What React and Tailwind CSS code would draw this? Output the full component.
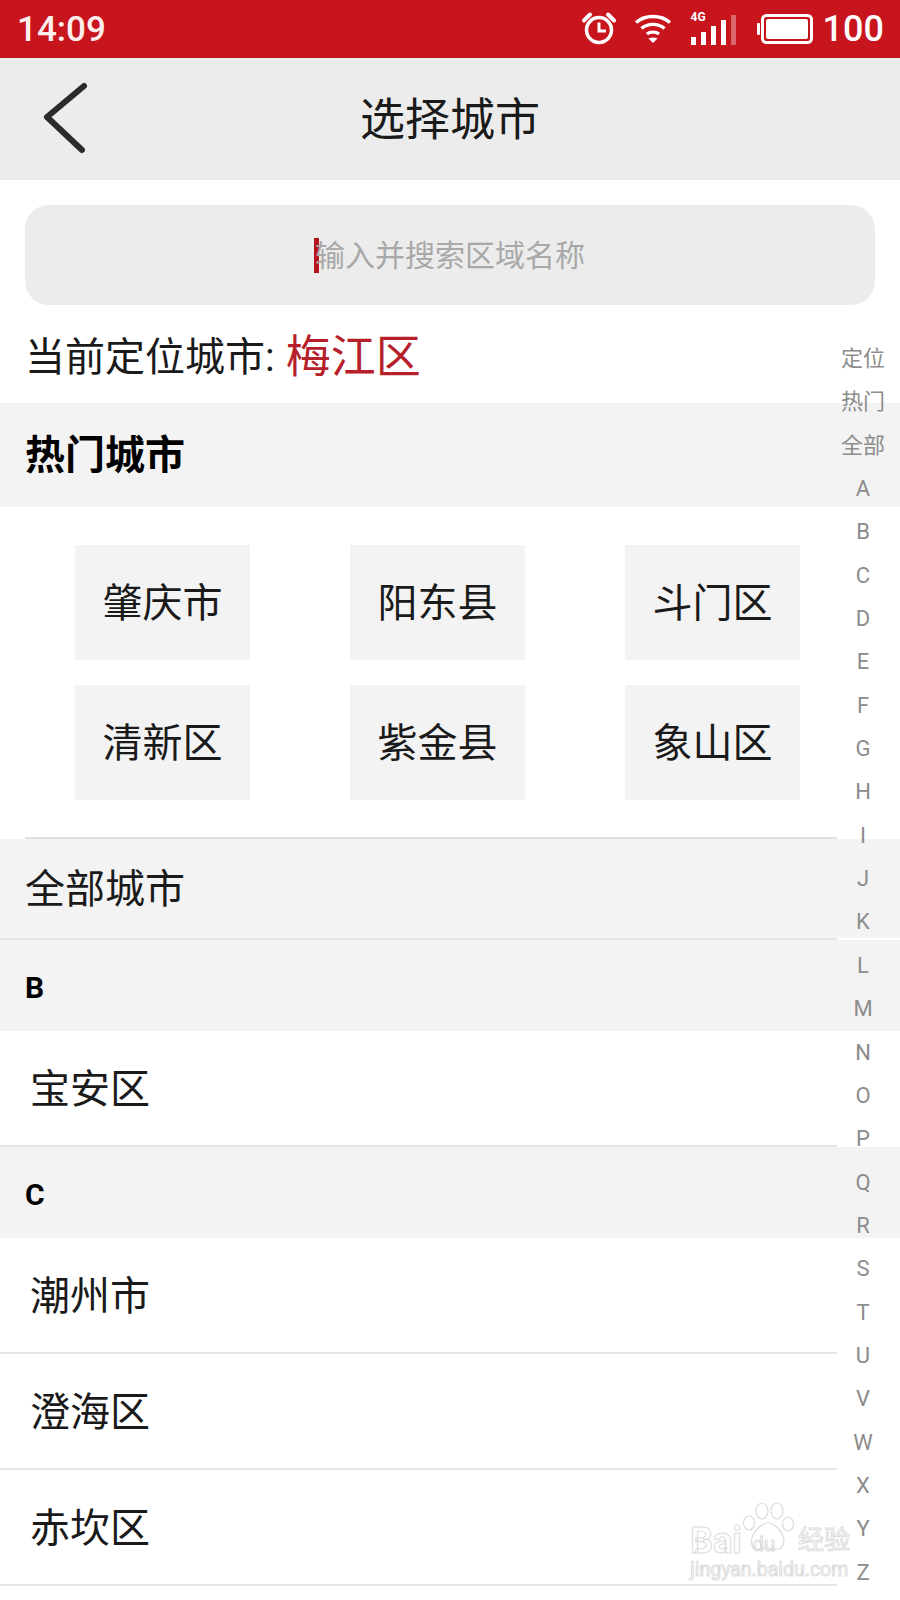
import React from 'react';

const hotCities = ['肇庆市', '阳东县', '斗门区', '清新区', '紫金县', '象山区'];
const indexItems = ['定位', '热门', '全部', ...'ABCDEFGHIJKLMNOPQRSTUVWXYZ'.split('')];

const StatusIcons = () => (
  <div className="flex items-center">
    <svg width="36" height="36" viewBox="0 0 36 36" fill="none" stroke="#fff" className="mr-[17px]">
      <circle cx="18" cy="19" r="12.5" strokeWidth="3.5" />
      <path d="M18 11.5V20H25" strokeWidth="3" />
      <path d="M3 9.5L9 3.5" strokeWidth="4" strokeLinecap="round" />
      <path d="M33 9.5L27 3.5" strokeWidth="4" strokeLinecap="round" />
    </svg>
    <svg width="38" height="34" viewBox="0 0 38 34" fill="none" stroke="#fff" strokeWidth="3.4" className="mr-[17px]">
      <path d="M2 10.5C11 2.5 27 2.5 36 10.5" />
      <path d="M7.5 16.5C13.500 11 24.500 11 30.500 16.500" />
      <path d="M13 22C16 19.500 22 19.500 25 22" />
      <path d="M19 31L14.500 26.500C17 25 21 25 23.500 26.500Z" fill="#fff" stroke="none" />
    </svg>
    <div className="relative w-[48px] h-[34px] mr-[20px]">
      <span className="absolute left-[2px] top-[-2px] text-[12px] font-bold leading-[14px] text-white">4G</span>
      <svg width="48" height="34" viewBox="0 0 48 34" fill="#fff">
        <rect x="2" y="25" width="5" height="8" />
        <rect x="12" y="20" width="5" height="13" />
        <rect x="22" y="14" width="5" height="19" />
        <rect x="32" y="8" width="5" height="25" />
        <rect x="42" y="3" width="5" height="30" opacity="0.35" />
      </svg>
    </div>
    <svg width="56" height="30" viewBox="0 0 56 30" fill="none" className="mr-[10px]">
      <rect x="5.500" y="1.500" width="49" height="27" rx="4" stroke="#fff" strokeWidth="3" />
      <rect x="9" y="5" width="42" height="20" rx="2" fill="#fff" />
      <rect x="0" y="9" width="3" height="12" rx="1" fill="#fff" />
    </svg>
    <span className="text-[36px] font-medium leading-none text-white">100</span>
  </div>
);

const Divider = () => (
  <div className="h-[2px] bg-white">
    <div className="w-[837px] h-full bg-[#e4e4e4]" />
  </div>
);

const CityRow = ({ name }) => (
  <>
    <div className="h-[114px] flex items-center pl-[30px] pt-[4px] text-[40px] text-[#1a1a1a]">{name}</div>
    <Divider />
  </>
);

const Letter = ({ children }) => (
  <div className="h-[91px] bg-[#f3f3f3] flex items-center pl-[25px] pt-[4px] text-[30px] font-bold text-black">
    {children}
  </div>
);

const App = () => {
  return (
    <div
      className="relative w-[900px] h-[1600px] overflow-hidden bg-white"
      style={{ fontFamily: 'Roboto, "Noto Sans CJK SC", sans-serif' }}
    >
      <div className="h-[58px] bg-[#c8141c] flex items-center justify-between pl-[17px] pr-[16px]">
        <span className="text-[35px] font-medium leading-none text-[#fdeeee]">14:09</span>
        <StatusIcons />
      </div>

      <header className="relative h-[122px] bg-[#ececec] flex items-center justify-center">
        <svg width="50" height="76" viewBox="0 0 50 76" fill="none" className="absolute left-[41px] top-[22px]">
          <path d="M43 6L6 37L41 70" stroke="#2b2b2b" strokeWidth="6" strokeLinecap="round" strokeLinejoin="round" />
        </svg>
        <h1 className="pt-[2px] text-[45px] leading-none text-[#1a1a1a]">选择城市</h1>
      </header>

      <div className="pt-[25px] px-[25px]">
        <div className="h-[100px] rounded-[24px] bg-[#ececec] flex items-center justify-center">
          <span className="w-[5px] h-[35px] -mr-[4px] -ml-[1px] bg-[#b5141c] shrink-0" />
          <span className="text-[30px] text-[#a8a8a8]">输入并搜索区域名称</span>
        </div>
      </div>

      <div className="h-[98px] flex items-center pl-[25px] pt-[7px] text-[40px] text-[#1a1a1a]">
        当前定位城市:
        <span className="ml-[11px] text-[45px] text-[#b5202a]">梅江区</span>
      </div>

      <div className="h-[104px] bg-[#f3f3f3] flex items-center pl-[25px] pt-[2px] text-[40px] font-bold text-black">
        热门城市
      </div>

      <div className="grid grid-cols-[175px_175px_175px] justify-between gap-y-[25px] pt-[38px] pb-[37px] pl-[75px] pr-[100px]">
        {hotCities.map((city) => (
          <div key={city} className="h-[115px] bg-[#f3f3f3] flex items-center justify-center pt-[2px] text-[40px] text-[#1a1a1a]">
            {city}
          </div>
        ))}
      </div>

      <div className="ml-[25px] w-[812px] h-[2px] bg-[#e0e0e0]" />
      <div className="h-[99px] bg-[#f3f3f3] flex items-center pl-[25px] pt-[2px] text-[40px] text-[#1a1a1a]">全部城市</div>
      <Divider />

      <Letter>B</Letter>
      <CityRow name="宝安区" />
      <Letter>C</Letter>
      <CityRow name="潮州市" />
      <CityRow name="澄海区" />
      <CityRow name="赤坎区" />

      {/* side index, floats over the list */}
      <div className="absolute right-0 top-[337px] w-[74px] flex flex-col items-center text-[22px] text-[#8c8c8c]">
        {indexItems.map((item) => (
          <div key={item} className="h-[43.35px] leading-[43.35px]">{item}</div>
        ))}
      </div>

      {/* baidu watermark */}
      <div className="absolute left-[688px] top-[1502px] w-[160px] h-[82px] text-transparent [-webkit-text-stroke:1px_#dcdcdc]">
        <span className="absolute left-[2px] top-[19px] text-[36px] font-bold leading-[40px]">Bai</span>
        <svg width="52" height="52" viewBox="0 0 52 52" fill="none" stroke="#dcdcdc" strokeWidth="1.200" className="absolute left-[54px] top-[0px]">
          <ellipse cx="20" cy="9" rx="6" ry="8" />
          <ellipse cx="35" cy="9" rx="6" ry="8" />
          <ellipse cx="7" cy="21" rx="5.500" ry="7" />
          <ellipse cx="46" cy="22" rx="5.500" ry="7" />
          <path d="M26 21C34 21 45 34 41 43C38 50 32 46 26 46C20 46 13 50 10 43C7 34 18 21 26 21Z" />
        </svg>
        <span className="absolute left-[64px] top-[30px] text-[21px] leading-[24px]">du</span>
        <span className="absolute left-[110px] top-[22px] text-[26px] leading-[32px] whitespace-nowrap">经验</span>
        <span className="absolute left-[2px] top-[56px] text-[19.5px] leading-[24px] whitespace-nowrap">jingyan.baidu.com</span>
      </div>
    </div>
  );
};

export default App;
